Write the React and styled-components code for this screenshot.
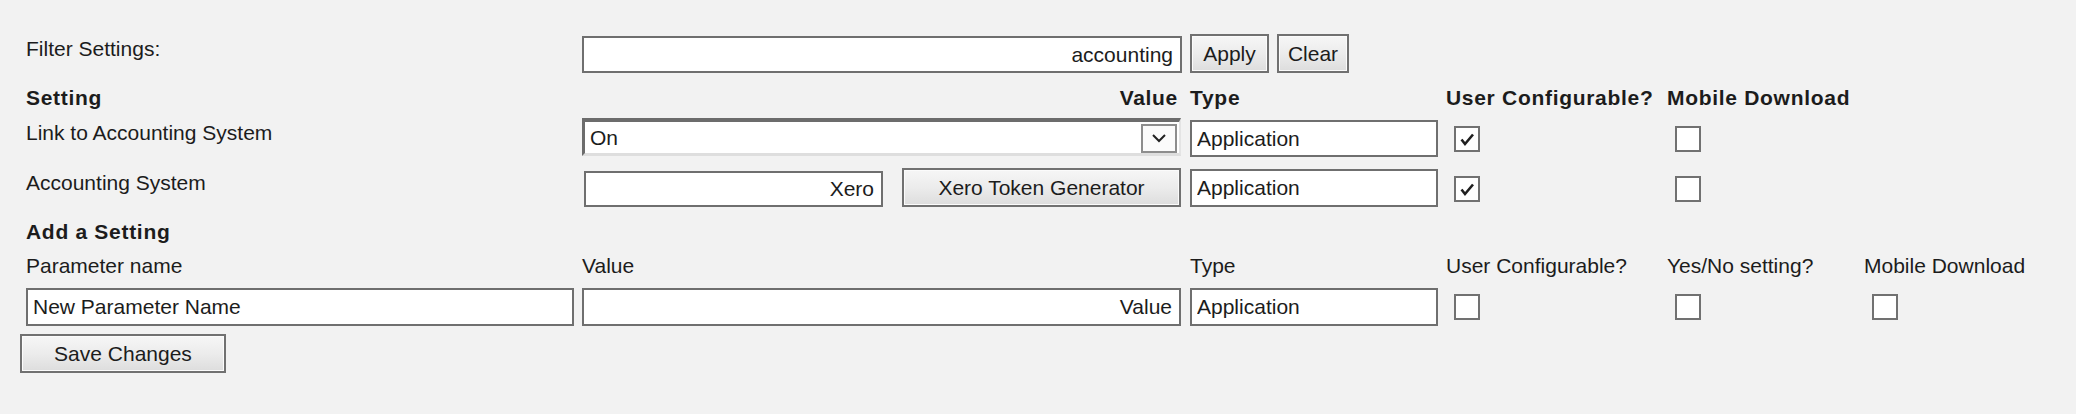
import React from 'react';
import styled, { createGlobalStyle } from 'styled-components';

const GlobalStyle = createGlobalStyle`
  html, body {
    margin: 0;
    padding: 0;
    background: #f2f2f2;
  }
  body {
    font-family: "Liberation Sans", Arial, sans-serif;
    font-size: 21px;
    color: #1c1c1c;
  }
`;

const Page = styled.div`
  box-sizing: border-box;
  height: 414px;
  padding: 34px 0 0 26px;
`;

const Table = styled.div`
  display: grid;
  grid-template-columns: 548px 600px 248px 213px 189px auto;
  grid-template-rows: 52px 32px 50px 52px 34px 34px 46px;
  column-gap: 8px;
  align-items: start;
`;

const Text = styled.div`
  line-height: 24px;
  white-space: nowrap;
  margin-top: ${p => p.$top || 0}px;
  font-weight: ${p => (p.$bold ? 700 : 400)};
  letter-spacing: ${p => (p.$bold ? '0.7px' : 'normal')};
  text-align: ${p => (p.$right ? 'right' : 'left')};
  padding-right: ${p => (p.$right ? '4px' : 0)};
  grid-column: ${p => (p.$span ? '1 / -1' : 'auto')};
`;

const TextBox = styled.input`
  box-sizing: border-box;
  display: block;
  width: ${p => p.$width}px;
  height: ${p => p.$height || 38}px;
  margin: ${p => p.$top || 0}px 0 0 ${p => p.$left || 0}px;
  padding: 0 7px 0 5px;
  border: 2px solid #6f6f6f;
  background: #fff;
  font: inherit;
  color: #1c1c1c;
  text-align: ${p => (p.$right ? 'right' : 'left')};
  outline: none;
`;

const Button = styled.button`
  box-sizing: border-box;
  width: ${p => p.$width}px;
  height: 39px;
  margin-left: ${p => p.$left || 0}px;
  padding: 0;
  border: 2px solid #717171;
  background: linear-gradient(#f6f6f6, #ececec 50%, #dddddd);
  box-shadow: inset 0 0 0 1px #fbfbfb;
  font: inherit;
  color: #1c1c1c;
  text-align: center;
`;

const ButtonGroup = styled.div`
  display: flex;
  gap: 8px;
`;

const ValueCell = styled.div`
  display: flex;
  align-items: flex-start;
  gap: 19px;
`;

const Select = styled.div`
  box-sizing: border-box;
  display: flex;
  align-items: center;
  width: 599px;
  height: 38px;
  border-top: 4px solid #6c6c6c;
  border-left: 3px solid #6c6c6c;
  border-bottom: 3px solid #dedede;
  border-right: 2px solid #e4e4e4;
  background: #fff;
`;

const SelectText = styled.span`
  flex: 1;
  padding-left: 5px;
  line-height: 24px;
`;

const Arrow = styled.span`
  box-sizing: border-box;
  display: flex;
  align-items: center;
  justify-content: center;
  width: 36px;
  height: 29px;
  margin: 1px 2px 0 0;
  border: 2px solid #8d8d8d;
  background: #fbfbfb;
`;

const Box = styled.span`
  box-sizing: border-box;
  display: flex;
  align-items: center;
  justify-content: center;
  width: 26px;
  height: 26px;
  margin: ${p => p.$top || 0}px 0 0 8px;
  border: 2px solid #717171;
  background: #fff;
`;

function Checkbox({ checked, top }) {
  return (
    <Box $top={top}>
      {checked && (
        <svg width="16" height="15" viewBox="0 0 16 15">
          <path d="M2.5 7.5 L6 12 L14 2.5" fill="none" stroke="#1f1f1f" strokeWidth="2.6" />
        </svg>
      )}
    </Box>
  );
}

const Footer = styled.div`
  margin-left: -6px;
`;

export default function App() {
  return (
    <>
      <GlobalStyle />
      <Page>
        <Table>
          {/* filter */}
          <Text $top={3}>Filter Settings:</Text>
          <TextBox $width={600} $height={37} $top={2} $right readOnly value="accounting" />
          <ButtonGroup>
            <Button $width={79}>Apply</Button>
            <Button $width={72}>Clear</Button>
          </ButtonGroup>
          <div />
          <div />
          <div />

          {/* headings */}
          <Text $bold>Setting</Text>
          <Text $bold $right>Value</Text>
          <Text $bold>Type</Text>
          <Text $bold>User Configurable?</Text>
          <Text $bold>Mobile Download</Text>
          <div />

          {/* settings */}
          <Text $top={3}>Link to Accounting System</Text>
          <Select>
            <SelectText>On</SelectText>
            <Arrow>
              <svg width="16" height="10" viewBox="0 0 16 10">
                <polyline points="2,2 8,8 14,2" fill="none" stroke="#222" strokeWidth="2" />
              </svg>
            </Arrow>
          </Select>
          <TextBox $width={248} $height={37} $top={2} readOnly value="Application" />
          <Checkbox checked top={8} />
          <Checkbox top={8} />
          <div />

          <Text $top={3}>Accounting System</Text>
          <ValueCell>
            <TextBox $width={299} $height={36} $top={3} $left={2} $right readOnly value="Xero" />
            <Button $width={279}>Xero Token Generator</Button>
          </ValueCell>
          <TextBox $width={248} $height={38} $top={1} readOnly value="Application" />
          <Checkbox checked top={8} />
          <Checkbox top={8} />
          <div />

          {/* new setting */}
          <Text $bold $span>Add a Setting</Text>

          <Text>Parameter name</Text>
          <Text>Value</Text>
          <Text>Type</Text>
          <Text>User Configurable?</Text>
          <Text>Yes/No setting?</Text>
          <Text>Mobile Download</Text>

          <TextBox $width={548} readOnly value="New Parameter Name" />
          <TextBox $width={599} $right readOnly value="Value" />
          <TextBox $width={248} readOnly value="Application" />
          <Checkbox top={6} />
          <Checkbox top={6} />
          <Checkbox top={6} />
        </Table>
        <Footer>
          <Button $width={206}>Save Changes</Button>
        </Footer>
      </Page>
    </>
  );
}
